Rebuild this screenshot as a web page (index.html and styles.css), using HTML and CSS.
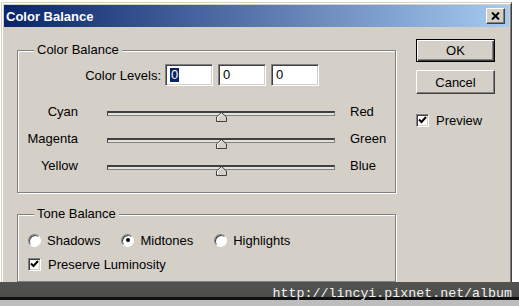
FILE: index.html
```html
<!DOCTYPE html>
<html lang="en">
<head>
    <meta charset="UTF-8">
    <title>Color Balance</title>
    <link rel="stylesheet" href="styles.css">
</head>
<body>
    <div class="dialog">
        <div class="titlebar">
            <span class="title">Color Balance</span>
            <span class="close-btn">
                <svg width="9" height="8" viewBox="0 0 9 8"><path d="M1 0.5 L8 7.5 M8 0.5 L1 7.5" stroke="#000" stroke-width="2"/></svg>
            </span>
        </div>

        <div class="content">
            <div class="main">
                <fieldset class="group">
                    <legend>Color Balance</legend>
                    <div class="levels-row">
                        <span class="levels-label">Color Levels:</span>
                        <span class="field"><span class="selected">0</span></span>
                        <span class="field">0</span>
                        <span class="field">0</span>
                    </div>

                    <div class="slider-row">
                        <span class="slider-left">Cyan</span>
                        <span class="track"><span class="thumb"><svg width="11" height="10" viewBox="0 0 11 10"><polygon points="5.5,0.5 10.5,5 10.5,9.5 0.5,9.5 0.5,5" fill="#d4d0c8" stroke="#404040"/><polyline points="1.5,8.5 1.5,5.3 5.5,1.8" fill="none" stroke="#fff"/></svg></span></span>
                        <span class="slider-right">Red</span>
                    </div>
                    <div class="slider-row">
                        <span class="slider-left">Magenta</span>
                        <span class="track"><span class="thumb"><svg width="11" height="10" viewBox="0 0 11 10"><polygon points="5.5,0.5 10.5,5 10.5,9.5 0.5,9.5 0.5,5" fill="#d4d0c8" stroke="#404040"/><polyline points="1.5,8.5 1.5,5.3 5.5,1.8" fill="none" stroke="#fff"/></svg></span></span>
                        <span class="slider-right">Green</span>
                    </div>
                    <div class="slider-row">
                        <span class="slider-left">Yellow</span>
                        <span class="track"><span class="thumb"><svg width="11" height="10" viewBox="0 0 11 10"><polygon points="5.5,0.5 10.5,5 10.5,9.5 0.5,9.5 0.5,5" fill="#d4d0c8" stroke="#404040"/><polyline points="1.5,8.5 1.5,5.3 5.5,1.8" fill="none" stroke="#fff"/></svg></span></span>
                        <span class="slider-right">Blue</span>
                    </div>
                </fieldset>

                <fieldset class="group tone">
                    <legend>Tone Balance</legend>
                    <div class="radio-row">
                        <label class="option"><span class="radio"></span>Shadows</label>
                        <label class="option"><span class="radio checked"></span>Midtones</label>
                        <label class="option"><span class="radio"></span>Highlights</label>
                    </div>
                    <div class="check-row">
                        <label class="option"><span class="checkbox"><svg width="9" height="8" viewBox="0 0 9 8"><path d="M1 3.5 L3.5 6 L8 1" fill="none" stroke="#000" stroke-width="2"/></svg></span>Preserve Luminosity</label>
                    </div>
                </fieldset>
            </div>

            <div class="side">
                <div class="btn default">OK</div>
                <div class="btn">Cancel</div>
                <label class="option preview"><span class="checkbox"><svg width="9" height="8" viewBox="0 0 9 8"><path d="M1 3.5 L3.5 6 L8 1" fill="none" stroke="#000" stroke-width="2"/></svg></span>Preview</label>
            </div>
        </div>
    </div>

    <div class="watermark">http://lincyi.pixnet.net/album</div>
</body>
</html>
```

FILE: styles.css
```css
body {
    margin: 0;
    width: 519px;
    height: 306px;
    overflow: hidden;
    position: relative;
    background: #fff;
    font-family: "Liberation Sans", Arial, sans-serif;
    font-size: 13px;
    color: #000;
}
.dialog {
    box-sizing: border-box;
    width: 511px;
    height: 304px;
    margin: 2px 0 0 1px;
    padding: 2px;
    background: #d4d0c8;
    border: 1px solid;
    border-color: #d4d0c8 #404040 #404040 #d4d0c8;
    box-shadow: inset 1px 1px #fff, inset -1px -1px #808080;
}
.titlebar {
    height: 22px;
    display: flex;
    align-items: center;
    justify-content: space-between;
    padding: 0 4px 0 2px;
    background: linear-gradient(to right, #0a246a, #a6caf0);
}
.title {
    color: #fff;
    font-weight: bold;
    font-size: 13px;
}
.close-btn {
    box-sizing: border-box;
    width: 19px;
    height: 16px;
    display: flex;
    align-items: center;
    justify-content: center;
    background: #d4d0c8;
    border: 1px solid;
    border-color: #fff #404040 #404040 #fff;
    box-shadow: inset -1px -1px #808080;
}
.content {
    display: flex;
    padding-left: 13px;
}
.main {
    width: 379px;
    padding-top: 15px;
}
.group {
    margin: 0;
    padding: 0 0 13px 0;
    border: 1px solid #808080;
    box-shadow: 1px 1px 0 #fff, inset 1px 1px 0 #fff;
}
.group legend {
    margin-left: 16px;
    padding: 0 3px;
    line-height: 16px;
    background: #d4d0c8;
}
.levels-row {
    display: flex;
    align-items: center;
    margin-top: 6px;
    margin-bottom: 12px;
}
.levels-label {
    width: 143px;
    text-align: right;
    margin-right: 4px;
}
.field {
    box-sizing: border-box;
    width: 48px;
    height: 22px;
    margin-right: 5px;
    padding: 3px 0 0 4px;
    line-height: 14px;
    background: #fff;
    border: 1px solid;
    border-color: #808080 #fff #fff #808080;
    box-shadow: inset 1px 1px #404040, inset -1px -1px #d4d0c8;
}
.selected {
    display: inline-block;
    background: #0a246a;
    color: #fff;
    padding: 0 1px;
}
.slider-row {
    display: flex;
    align-items: center;
    height: 27px;
}
.slider-left {
    width: 60px;
    text-align: right;
    margin-right: 29px;
}
.track {
    box-sizing: border-box;
    position: relative;
    width: 228px;
    height: 5px;
    margin-top: 4px;
    margin-right: 15px;
    background: #e4e2dc;
    border: 1px solid;
    border-top-width: 2px;
    border-color: #404040 #808080 #808080 #404040;
}
.thumb {
    position: absolute;
    left: 108px;
    top: -1px;
    line-height: 0;
}
.radio-row,
.check-row {
    display: flex;
    align-items: center;
    height: 16px;
    padding-left: 10px;
}
.radio-row {
    margin-top: 10px;
    gap: 21px;
}
.check-row {
    margin-top: 8px;
}
.tone {
    margin-top: 13px;
    padding-bottom: 9px;
}
.option {
    display: flex;
    align-items: center;
}
.radio {
    box-sizing: border-box;
    position: relative;
    width: 13px;
    height: 13px;
    margin-right: 6px;
    border-radius: 50%;
    background: #fff;
    border: 1px solid;
    border-color: #808080 #fff #fff #808080;
    box-shadow: inset 1px 1px #404040;
}
.radio.checked::after {
    content: "";
    position: absolute;
    left: 3.5px;
    top: 3.5px;
    width: 4px;
    height: 4px;
    border-radius: 50%;
    background: #000;
}
.checkbox {
    box-sizing: border-box;
    width: 13px;
    height: 13px;
    margin-right: 7px;
    display: flex;
    align-items: center;
    justify-content: center;
    background: #fff;
    border: 1px solid;
    border-color: #808080 #fff #fff #808080;
    box-shadow: inset 1px 1px #404040, inset -1px -1px #d4d0c8;
}
.side {
    width: 79px;
    margin-left: 20px;
    padding-top: 12px;
}
.btn {
    box-sizing: border-box;
    height: 24px;
    display: flex;
    align-items: center;
    justify-content: center;
    background: #d4d0c8;
    border: 1px solid;
    border-color: #fff #404040 #404040 #fff;
    box-shadow: inset -1px -1px #808080;
}
.btn.default {
    height: 23px;
    margin-bottom: 8px;
    border-color: #000;
    box-shadow: inset 1px 1px #fff, inset -1px -1px #404040, inset -2px -2px #808080;
}
.preview {
    margin-top: 18px;
    height: 16px;
}
.watermark {
    position: absolute;
    left: 0;
    bottom: 0;
    box-sizing: border-box;
    width: 519px;
    height: 24px;
    padding: 4px 7px 0 0;
    text-align: right;
    font-family: "Liberation Mono", "Courier New", monospace;
    font-size: 13.3px;
    line-height: 16px;
    color: #f2f2f2;
    background: linear-gradient(to bottom, #535350 0, #4c4c4a 15px, #111 15px, #111 18px, #bdbdbd 18px);
}
```
